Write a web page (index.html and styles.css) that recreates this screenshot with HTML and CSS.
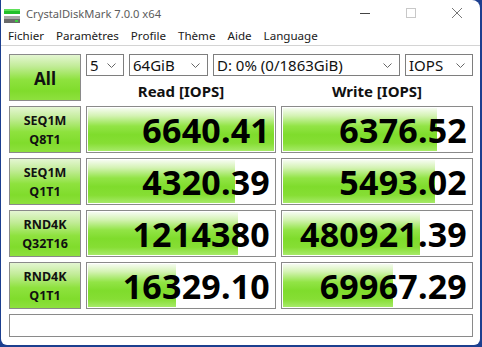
FILE: index.html
```html
<!DOCTYPE html>
<html>
<head>
<meta charset="utf-8">
<link rel="stylesheet" href="styles.css">
</head>
<body>
<div class="win">
  <div class="titlebar">
    <svg class="appicon" width="18" height="18" viewBox="0 0 18 18">
      <rect x="2" y="4" width="16" height="5" fill="#22c02a"/>
      <rect x="2" y="4" width="16" height="2" fill="#5fe05a"/>
      <rect x="2" y="11" width="16" height="8" fill="#6a6a6a"/>
      <rect x="2" y="11" width="16" height="3" fill="#a8a8a8"/>
      <rect x="13" y="15" width="3" height="2" fill="#3ad040"/>
    </svg>
    <span class="title">CrystalDiskMark 7.0.0 x64</span>
    <div class="controls">
      <svg width="12" height="12" viewBox="0 0 12 12"><line x1="1" y1="6.5" x2="11" y2="6.5" stroke="#444" stroke-width="1"/></svg>
      <svg width="12" height="12" viewBox="0 0 12 12"><rect x="1.5" y="1.5" width="9" height="9" fill="none" stroke="#c8c8c8" stroke-width="1"/></svg>
      <svg width="12" height="12" viewBox="0 0 12 12"><path d="M1 1 L11 11 M11 1 L1 11" stroke="#777" stroke-width="1"/></svg>
    </div>
  </div>
  <div class="menubar">
    <span>Fichier</span><span>Paramètres</span><span>Profile</span><span>Thème</span><span>Aide</span><span>Language</span>
  </div>
  <div class="content">
    <div class="grid">
      <div class="btn all">All</div>
      <div class="topright">
        <div class="selects">
          <div class="sel s1"><span>5</span><svg width="9" height="6" viewBox="0 0 9 6"><path d="M0.5 0.5 L4.5 4.5 L8.5 0.5" fill="none" stroke="#666"/></svg></div>
          <div class="sel s2"><span>64GiB</span><svg width="9" height="6" viewBox="0 0 9 6"><path d="M0.5 0.5 L4.5 4.5 L8.5 0.5" fill="none" stroke="#666"/></svg></div>
          <div class="sel s3"><span>D: 0% (0/1863GiB)</span><svg width="9" height="6" viewBox="0 0 9 6"><path d="M0.5 0.5 L4.5 4.5 L8.5 0.5" fill="none" stroke="#666"/></svg></div>
          <div class="sel s4"><span>IOPS</span><svg width="9" height="6" viewBox="0 0 9 6"><path d="M0.5 0.5 L4.5 4.5 L8.5 0.5" fill="none" stroke="#666"/></svg></div>
        </div>
        <div class="heads">
          <div class="head">Read [IOPS]</div>
          <div class="head">Write [IOPS]</div>
        </div>
      </div>

      <div class="btn lbl"><span>SEQ1M</span><span>Q8T1</span></div>
      <div class="meter"><div class="fill" style="width:100%"></div><span class="val">6640.41</span></div>
      <div class="meter"><div class="fill" style="width:81%"></div><span class="val">6376.52</span></div>

      <div class="btn lbl"><span>SEQ1M</span><span>Q1T1</span></div>
      <div class="meter"><div class="fill" style="width:78%"></div><span class="val">4320.39</span></div>
      <div class="meter"><div class="fill" style="width:80%"></div><span class="val">5493.02</span></div>

      <div class="btn lbl"><span>RND4K</span><span>Q32T16</span></div>
      <div class="meter"><div class="fill" style="width:80%"></div><span class="val">1214380</span></div>
      <div class="meter"><div class="fill" style="width:72%"></div><span class="val">480921.39</span></div>

      <div class="btn lbl"><span>RND4K</span><span>Q1T1</span></div>
      <div class="meter"><div class="fill" style="width:47%"></div><span class="val">16329.10</span></div>
      <div class="meter"><div class="fill" style="width:58%"></div><span class="val">69967.29</span></div>

      <div class="comment"></div>
    </div>
  </div>
</div>
</body>
</html>
```
FILE: styles.css
```css
* { box-sizing: border-box; }
html, body { margin: 0; padding: 0; }
body {
  width: 482px;
  height: 347px;
  background: #1c3f8f;
  overflow: hidden;
  font-family: "Noto Sans", "Open Sans", sans-serif;
}
.win {
  margin-left: 1px;
  width: 479px;
  height: 345px;
  background: #ffffff;
  border-radius: 0 8px 6px 6px;
  overflow: hidden;
}
.titlebar {
  height: 26px;
  display: flex;
  align-items: center;
  padding-left: 1px;
}
.appicon { flex: none; margin-top: 1px; }
.title {
  margin-left: 6px;
  font-size: 11.2px;
  color: #5c5c5c;
}
.controls {
  margin-left: auto;
  display: flex;
  gap: 34px;
  padding-right: 17px;
  align-items: center;
}
.menubar {
  height: 20px;
  display: flex;
  align-items: center;
  padding-left: 7px;
  font-size: 11.6px;
  color: #1a1a1a;
  border-bottom: 1px solid #d4d4d4;
}
.menubar span { margin-right: 12px; }
.content {
  padding: 8px 0 0 8px;
}
.grid {
  display: grid;
  grid-template-columns: 72px 190px 192px;
  grid-template-rows: 47px 47px 47px 47px 47px 23px;
  column-gap: 5px;
  row-gap: 5px;
}
.btn {
  border: 1px solid #8a8a8a;
  background: linear-gradient(to bottom, #e4f6d2 0%, #c2ec98 25%, #8ee23e 55%, #80dc2c 80%, #8ee03e 100%);
  display: flex;
  flex-direction: column;
  align-items: center;
  justify-content: center;
  font-weight: bold;
  color: #111;
}
.all { font-size: 17px; padding-top: 2px; }
.lbl { font-size: 12.5px; line-height: 19px; }
.topright {
  grid-column: 2 / 4;
  display: flex;
  flex-direction: column;
}
.selects {
  display: flex;
  gap: 5px;
  height: 25px;
}
.sel {
  border: 1px solid #7e7e7e;
  background: #fff;
  display: flex;
  align-items: center;
  justify-content: space-between;
  padding: 0 7px 0 3px;
  font-size: 15px;
  color: #111;
}
.sel svg { flex: none; margin-top: 1px; }
.s1 { width: 38px; }
.s2 { width: 79px; }
.s3 { width: 187px; }
.s4 { width: 68px; }
.heads {
  display: grid;
  grid-template-columns: 190px 192px;
  column-gap: 5px;
  flex: 1;
}
.head {
  text-align: center;
  font-weight: bold;
  font-size: 15px;
  color: #111;
  padding-top: 5px;
}
.meter {
  position: relative;
  border: 1px solid #8a8a8a;
  padding: 1px;
  background: #fff;
  display: flex;
  align-items: center;
  justify-content: flex-end;
}
.fill {
  position: absolute;
  left: 1px;
  top: 1px;
  bottom: 1px;
  max-width: calc(100% - 2px);
  background: linear-gradient(to bottom, #f6fcf1 0%, #d4f3b4 18%, #92e446 42%, #7fdc2c 62%, #86de34 82%, #a6ea68 100%);
}
.val {
  position: relative;
  font-weight: bold;
  font-size: 34px;
  line-height: 1;
  color: #000;
  padding-right: 4px;
  letter-spacing: 0.2px;
}
.comment {
  grid-column: 1 / 4;
  border: 1px solid #8a8a8a;
  background: #fff;
}
```
